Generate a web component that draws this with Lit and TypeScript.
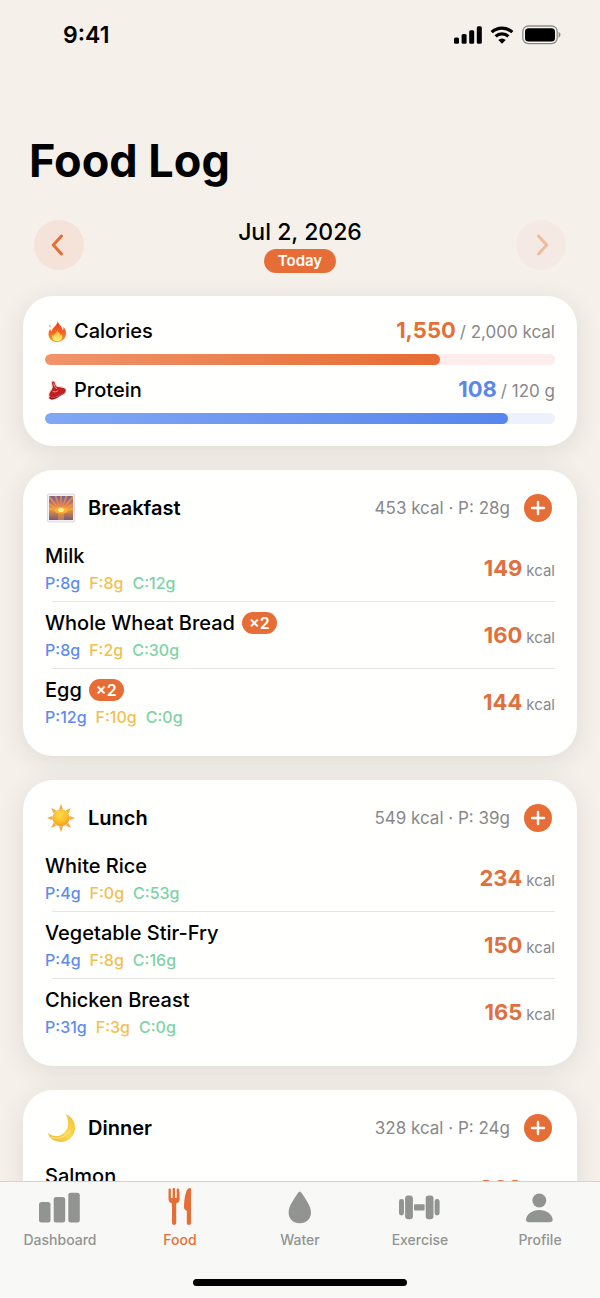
import { LitElement, html, css, svg, nothing } from "lit";
import { customElement, property } from "lit/decorators.js";

interface Food {
  name: string;
  kcal: number;
  qty?: number;
  macros?: [number, number, number];
}

interface Meal {
  icon: string;
  title: string;
  kcal: number;
  protein: number;
  foods: Food[];
}

const MEALS: Meal[] = [
  {
    icon: "sunrise",
    title: "Breakfast",
    kcal: 453,
    protein: 28,
    foods: [
      { name: "Milk", kcal: 149, macros: [8, 8, 12] },
      { name: "Whole Wheat Bread", kcal: 160, qty: 2, macros: [8, 2, 30] },
      { name: "Egg", kcal: 144, qty: 2, macros: [12, 10, 0] },
    ],
  },
  {
    icon: "sun",
    title: "Lunch",
    kcal: 549,
    protein: 39,
    foods: [
      { name: "White Rice", kcal: 234, macros: [4, 0, 53] },
      { name: "Vegetable Stir-Fry", kcal: 150, macros: [4, 8, 16] },
      { name: "Chicken Breast", kcal: 165, macros: [31, 3, 0] },
    ],
  },
  {
    icon: "moon",
    title: "Dinner",
    kcal: 328,
    protein: 24,
    foods: [{ name: "Salmon", kcal: 208 }],
  },
];

const rays = [0, 45, 90, 135, 180, 225, 270, 315];
const beams = [-80, -60, -40, -20, 0, 20, 40, 60, 80];

const PICTURES: Record<string, unknown> = {
  fire: svg`
    <defs>
      <linearGradient id="flame" x1="0" y1="0" x2="0" y2="1">
        <stop offset="0" stop-color="#f0361c" /><stop offset=".55" stop-color="#f9641e" /><stop offset="1" stop-color="#fb9a2a" />
      </linearGradient>
      <linearGradient id="core" x1="0" y1="0" x2="0" y2="1">
        <stop offset="0" stop-color="#fdb52c" /><stop offset="1" stop-color="#fff27a" />
      </linearGradient>
    </defs>
    <path fill="url(#flame)" d="M10.600 0c.6 3.200 4.600 5 5 9.200.8-.7 1.100-1.900.9-3.100 1.700 2 2.700 4.600 2.500 7C18.700 17.600 15 21 10.300 21 5.300 21 1.600 17.700 1.500 13.200c0-2.200.7-3.900 1.900-5.200.1 1.200.5 2 1.300 2.600C5 6.200 10.200 5 10.600 0z" />
    <path fill="#f6502a" d="M2.600 3.800c.9.6 1.200 1.500.7 2.400-.9-.5-1.200-1.400-.7-2.400z" />
    <path fill="url(#core)" d="M10.300 9c.4 2.200 3 3.100 3.200 5.300.5-.3.800-.8.900-1.400 2.300 3.700.3 7.100-4.100 7.100-4.300 0-6.300-3.200-4.600-6.600.4.9.9 1.300 1.500 1.500.1-2.600 2.600-3.300 3.100-5.900z" />`,
  meat: svg`
    <path fill="#efe0dc" d="M5 .8C7.600-.3 9 1.600 9.600 4.200c.4 1.500 1.400 1.300 3.200 1.600 3.800.5 6.800 2.300 6.700 4.800-.1 2.700-3.800 4-6.500 5.900C9.600 18.900 6.100 20.900 3 20 .5 19.200.3 16.400 1.400 13.400c.9-2.600 2.600-3.600 2.900-5.600C4.600 5.300 2.900 2.200 5 .8z" />
    <path fill="#c21f22" d="M5.800 1.600c1.600-.3 2.100 1.200 2.600 3.200.5 2.100 2 2.200 4.200 2.400 3.600.3 6.600 1.400 6.200 3.500-.4 2-3.500 3-6.300 4.600-3.500 2-6.600 2.600-9 1.600-1.900-.9-1.500-3.300-.1-5.200C5 9.400 6 8.300 5.700 6 5.400 4.200 4.300 2.100 5.800 1.600z" />
    <path fill="#8d1216" d="M2.300 16.800c2.600 1.500 6.500.8 10.200-1.300 2.600-1.500 5-2.500 6.200-4-.1 2-3.200 3-6 4.800-3.300 2.300-6.500 3.800-9 3-1.300-.4-1.700-1.400-1.400-2.500z" />
    <path fill="none" stroke="#f0a49a" stroke-width=".9" stroke-linecap="round" d="M6.700 3.600c.9 2.200.7 4.300 3 4.800M6 11.500c1.500 1 3.200.4 4.600-.6" />`,
  sunrise: svg`
    <defs>
      <linearGradient id="dawn" x1="0" y1="0" x2="0" y2="1">
        <stop offset="0" stop-color="#76608f" /><stop offset=".3" stop-color="#c4716a" /><stop offset=".56" stop-color="#f7a23a" />
        <stop offset=".62" stop-color="#dd8a3c" /><stop offset="1" stop-color="#79587c" />
      </linearGradient>
      <clipPath id="frame"><rect x="2" y="3" width="24" height="24" /></clipPath>
    </defs>
    <rect x=".5" y="1" width="27" height="28" rx="1" fill="#f3f1f5" stroke="#dcdae2" />
    <rect x="2" y="3" width="24" height="24" fill="url(#dawn)" />
    <g clip-path="url(#frame)">
      ${beams.map((a) => svg`<path d="M14 18 L12.600 -4 L15.400 -4 Z" fill="#ffa63c" opacity=".6" transform="rotate(${a} 14 18)" />`)}
      <ellipse cx="14" cy="17.500" rx="7" ry="3.200" fill="#ffb63a" opacity=".8" /><ellipse cx="14" cy="17" rx="3" ry="2" fill="#fff08a" />
      <path d="M11 20h6v7h-6z" fill="#f3a53a" opacity=".45" />
    </g>`,
  sun: svg`
    <defs><radialGradient id="disc" cx=".45" cy=".3" r=".75">
      <stop offset="0" stop-color="#ffdf4a" /><stop offset=".6" stop-color="#fbbd27" /><stop offset="1" stop-color="#ee9320" />
    </radialGradient></defs>
    ${rays.map((a) => svg`<path d="M14 1 L16 6.400 H12 Z" fill="#f3ab3c" transform="rotate(${a} 14 15)" />`)}
    <circle cx="14" cy="15" r="8.300" fill="url(#disc)" stroke="#ee9c2c" stroke-width=".5" />`,
  moon: svg`
    <defs><linearGradient id="lune" x1="0" y1="1" x2="1" y2="0">
      <stop offset="0" stop-color="#e9b53a" /><stop offset=".5" stop-color="#fbd84f" /><stop offset="1" stop-color="#f3bf38" />
    </linearGradient></defs>
    <path fill="url(#lune)" d="M18.500 1.200C25 3.200 28.600 9.600 28 16c-.7 7.400-6.600 13-14 13C7.600 29 2.200 25.400.6 19.600c2.800 3 7.600 4.400 12.200 2.800C21.300 19.400 23.600 9 18.500 1.200z" />
    <path fill="none" stroke="#fff0a0" stroke-width="1" stroke-linecap="round" opacity=".8" d="M4.500 24c6 2.800 14.600.6 18.300-6.500" />`,
};

const picture = (name: string, cls: string, box: string) =>
  html`<svg class=${cls} viewBox=${box} aria-hidden="true">${PICTURES[name]}</svg>`;

@customElement("progress-line")
class ProgressLine extends LitElement {
  @property() label = "";
  @property() icon = "";
  @property() unit = "";
  @property() tone = "";
  @property({ type: Number }) value = 0;
  @property({ type: Number }) goal = 1;
  @property({ type: Number }) filled = 0;

  static styles = css`
    :host { display: block; }
    .body { display: grid; gap: 9px; }
    .head { display: flex; align-items: center; justify-content: space-between; height: 28px; line-height: 28px; }
    .label { display: flex; align-items: center; gap: 7px; font-size: 20px; font-weight: 500; color: #000; }
    .pic { width: 20px; height: 21px; margin-left: 2px; }
    .amount { display: flex; align-items: baseline; gap: 4px; }
    .value { font-size: 22px; font-weight: 700; }
    .goal { font-size: 17px; color: #88888b; }
    .track { height: 11px; border-radius: 6px; overflow: hidden; }
    .fill { height: 11px; border-radius: 6px; }
    .orange .value { color: #e66f38; }
    .blue .value { color: #5b87ec; }
    .orange .track { background: #feedea; }
    .blue .track { background: #edf1fd; }
    .orange .fill { background: linear-gradient(90deg, #f0946b, #e66c33); }
    .blue .fill { background: linear-gradient(90deg, #81a7f5, #5685ed); }
  `;

  render() {
    return html`<div class="body ${this.tone}">
      <div class="head">
        <span class="label">${picture(this.icon, "pic", "0 0 20 21")}${this.label}</span>
        <span class="amount">
          <span class="value">${this.value.toLocaleString("en-US")}</span>
          <span class="goal">/ ${this.goal.toLocaleString("en-US")} ${this.unit}</span>
        </span>
      </div>
      <div class="track" role="progressbar" aria-label=${this.label} aria-valuenow=${this.value} aria-valuemax=${this.goal}>
        <div class="fill" style="width:${this.filled}%"></div>
      </div>
    </div>`;
  }
}

@customElement("meal-card")
class MealCard extends LitElement {
  @property({ attribute: false }) meal!: Meal;

  static styles = css`
    :host { display: block; }
    .head { display: flex; align-items: center; height: 34px; margin-bottom: 10px; }
    .pic { width: 28px; height: 30px; margin: 0 13px 0 2px; overflow: visible; }
    h2 { margin: 0; flex: 1; font-size: 20px; font-weight: 600; color: #000; }
    .total { font-size: 17px; color: #88888b; }
    .add { width: 28px; height: 28px; margin: 0 3px 0 14px; padding: 0; border: 0; border-radius: 50%; background: #e66e36; display: grid; place-items: center; }
    .add svg { width: 16px; height: 16px; stroke: #fff; stroke-width: 2.4; stroke-linecap: round; }
    ul { margin: 0; padding: 0; list-style: none; }
    li { display: flex; align-items: center; justify-content: space-between; padding: 7px 0 8px; position: relative; }
    li + li { margin-top: 1px; }
    li + li::before { content: ""; position: absolute; left: 7px; right: 0; top: -1px; height: 1px; background: #e6e6e6; }
    .name { display: flex; align-items: center; gap: 7px; height: 28px; font-size: 20px; font-weight: 500; color: #000; }
    .qty { padding: 0 7px; height: 22px; line-height: 22px; border-radius: 11px; background: #e66e36; color: #fff; font-size: 16px; font-weight: 600; }
    .macros { display: flex; gap: 9px; margin-top: 3px; height: 20px; line-height: 20px; font-size: 16px; font-weight: 500; }
    .p { color: #5f8bee; }
    .f { color: #f3c050; }
    .c { color: #7dd3a6; }
    .kcal { display: flex; align-items: baseline; gap: 4px; font-size: 15px; color: #88888b; }
    .kcal b { font-size: 22px; font-weight: 700; color: #e07040; }
  `;

  render() {
    const m = this.meal;
    return html`
      <div class="head">
        ${picture(m.icon, "pic", "0 0 28 30")}
        <h2>${m.title}</h2>
        <span class="total">${m.kcal} kcal · P: ${m.protein}g</span>
        <button class="add" aria-label="Add to ${m.title}">
          <svg viewBox="0 0 16 16"><path d="M8 2v12M2 8h12" /></svg>
        </button>
      </div>
      <ul>
        ${m.foods.map(
          (f) => html`<li>
            <div>
              <div class="name">${f.name}${f.qty ? html`<span class="qty">×${f.qty}</span>` : nothing}</div>
              <div class="macros">
                ${f.macros
                  ? html`<span class="p">P:${f.macros[0]}g</span><span class="f">F:${f.macros[1]}g</span><span class="c">C:${f.macros[2]}g</span>`
                  : nothing}
              </div>
            </div>
            <div class="kcal"><b>${f.kcal}</b><span>kcal</span></div>
          </li>`
        )}
      </ul>
    `;
  }
}

const TABS = [
  {
    label: "Dashboard",
    icon: svg`<rect x="0" y="15" width="11.500" height="20.500" rx="2.500" /><rect x="14.700" y="10" width="11.500" height="25.500" rx="2.500" /><rect x="29.300" y="5.800" width="11.500" height="29.700" rx="2.500" />`,
  },
  {
    label: "Food",
    icon: svg`<path d="M10.700 1.500c.9 0 1.200.5 1.200 1.300V11h1.700V2.400c0-.9.4-1.300 1.200-1.300s1.200.4 1.200 1.300V11h1.700V2.800c0-.8.3-1.300 1.200-1.300s1.200.5 1.300 1.300l.5 8.700c.1 2.700-1.100 4.200-3.500 5.100v19c0 1.600-.8 2.300-2.100 2.300s-2.100-.7-2.100-2.300v-19c-2.400-.9-3.600-2.400-3.500-5.100L9.500 2.800c.1-.8.4-1.300 1.200-1.300z" /><path d="M30.800 1.100c.9 0 1.200.4 1.200 1.300v33.300c0 1.500-.8 2.200-2.100 2.200s-2.100-.7-2.100-2.200V23.500c-1.600-.2-2.700-1.200-2.700-3 0-7 1.300-19.400 5.700-19.400z" />`,
  },
  {
    label: "Water",
    icon: svg`<path d="M20.800 4.700c.8 0 1.500.7 2.100 1.600 3.500 5.700 9.100 13 9.100 19 0 6.800-4.700 11-11.200 11s-11.200-4.200-11.200-11c0-6 5.600-13.300 9.100-19 .6-.9 1.300-1.600 2.100-1.600z" />`,
  },
  {
    label: "Exercise",
    icon: svg`<rect x="0" y="12" width="5" height="16.500" rx="2.400" /><rect x="6.100" y="8.400" width="7.800" height="23.800" rx="3" /><rect x="15" y="17.200" width="10.600" height="6.200" rx="1" /><rect x="26.700" y="8.400" width="7.800" height="23.800" rx="3" /><rect x="35.600" y="12" width="5" height="16.500" rx="2.400" />`,
  },
  {
    label: "Profile",
    icon: svg`<circle cx="20.300" cy="13.500" r="6.900" /><path d="M10.100 35.200c-2.100 0-3.300-.9-3.100-2.900.6-5.100 6-9.400 13.300-9.400s12.700 4.300 13.300 9.400c.2 2-1 2.900-3.100 2.900z" />`,
  },
];

@customElement("app-root")
class AppRoot extends LitElement {
  static styles = css`
    :host { display: flex; flex-direction: column; height: 100vh; overflow: hidden; background: #f5f0ea; font-family: Inter, "Liberation Sans", sans-serif; color: #000; }
    * { box-sizing: border-box; }
    button { font: inherit; }
    .status { flex: none; height: 69px; padding: 0 39px 0 63px; display: flex; align-items: center; justify-content: space-between; font-size: 23px; font-weight: 600; }
    .signals { display: flex; align-items: center; gap: 8px; }
    .cell { width: 28px; height: 18px; }
    .wifi { width: 24px; height: 18px; }
    .battery { width: 39px; height: 20px; }
    main { flex: 1; min-height: 0; overflow-y: auto; scrollbar-width: none; padding: 64px 23px 24px; }
    h1 { margin: 0; padding-left: 6px; font-size: 45px; line-height: 56px; font-weight: 700; }
    .dates { display: flex; align-items: center; justify-content: space-between; margin: 28px 11px 23px; height: 56px; }
    .step { width: 50px; height: 50px; padding: 0; border: 0; border-radius: 50%; background: #f5e3d9; display: grid; place-items: center; }
    .step:disabled { opacity: .4; }
    .step svg { width: 24px; height: 24px; fill: none; stroke: #e66e36; stroke-width: 3; stroke-linecap: round; stroke-linejoin: round; }
    .day { display: grid; justify-items: center; gap: 2px; }
    .date { font-size: 23px; line-height: 30px; font-weight: 500; }
    .today { height: 24px; line-height: 24px; padding: 0 14px; border-radius: 12px; background: #e66e36; color: #fff; font-size: 15px; font-weight: 600; }
    .cards { display: grid; gap: 24px; }
    .card { background: #fffffe; border-radius: 30px; padding: 21px 22px; box-shadow: 0 5px 26px rgba(40, 50, 30, .1); }
    .summary { display: grid; gap: 11px; padding-bottom: 22px; }
    .tabs { flex: none; position: relative; height: 117px; display: grid; grid-template-columns: repeat(5, 1fr); align-items: start; background: #f8f8f7; border-top: 1px solid #d2d2d0; }
    .tab { display: grid; justify-items: center; text-decoration: none; color: #929492; font-size: 14px; line-height: 20px; font-weight: 500; padding-top: 5px; gap: 4px; }
    .tab svg { width: 42px; height: 39px; fill: currentColor; }
    .on { color: #e66e36; }
    .home { position: absolute; left: 50%; bottom: 12px; width: 214px; height: 7px; margin-left: -107px; border-radius: 4px; background: #000; }
  `;

  render() {
    return html`
      <header class="status">
        <span>9:41</span>
        <span class="signals">
          <svg class="cell" viewBox="0 0 28 18" aria-hidden="true">
            <rect x="0" y="11.500" width="5" height="6.300" rx="1.500" /><rect x="7.600" y="8" width="5" height="9.800" rx="1.500" />
            <rect x="15.200" y="4.200" width="5" height="13.600" rx="1.500" /><rect x="22.800" y=".3" width="5" height="17.500" rx="1.500" />
          </svg>
          <svg class="wifi" viewBox="0 0 24 18" aria-hidden="true">
            <path d="M1.700 6.200a15 15 0 0 1 20.600 0M5.600 10.400a9.300 9.300 0 0 1 12.800 0" fill="none" stroke="#000" stroke-width="3.200" />
            <path d="M12 17.800 8.300 14.100a5.300 5.300 0 0 1 7.400 0z" />
          </svg>
          <svg class="battery" viewBox="0 0 39 20" aria-hidden="true">
            <rect x=".8" y="1" width="34.400" height="17.600" rx="5.500" fill="none" stroke="#8f8c88" stroke-width="1.300" />
            <rect x="3" y="3.200" width="30" height="13.200" rx="3.500" />
            <path d="M36.600 7v5.600c1.200-.4 1.900-1.500 1.900-2.800s-.7-2.400-1.900-2.800z" fill="#8f8c88" />
          </svg>
        </span>
      </header>
      <main>
        <h1>Food Log</h1>
        <div class="dates">
          <button class="step" aria-label="Previous day"><svg viewBox="0 0 24 24"><path d="M14.500 3 6.300 12l8.200 9" /></svg></button>
          <div class="day"><span class="date">Jul 2, 2026</span><span class="today">Today</span></div>
          <button class="step" aria-label="Next day" disabled><svg viewBox="0 0 24 24"><path d="M9.500 3l8.200 9-8.200 9" /></svg></button>
        </div>
        <div class="cards">
          <section class="card summary">
            <progress-line label="Calories" icon="fire" tone="orange" value="1550" goal="2000" unit="kcal" filled="77.5"></progress-line>
            <progress-line label="Protein" icon="meat" tone="blue" value="108" goal="120" unit="g" filled="90.8"></progress-line>
          </section>
          ${MEALS.map((m) => html`<meal-card class="card" .meal=${m}></meal-card>`)}
        </div>
      </main>
      <nav class="tabs">
        ${TABS.map(
          (t) => html`<a class="tab ${t.label === "Food" ? "on" : ""}" href="#${t.label.toLowerCase()}">
            <svg viewBox="0 0 42 39" aria-hidden="true">${t.icon}</svg>${t.label}
          </a>`
        )}
        <div class="home"></div>
      </nav>
    `;
  }
}
